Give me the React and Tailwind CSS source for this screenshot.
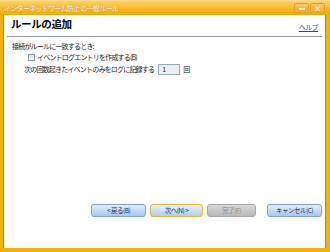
import React from "react";

const jp = { fontFamily: '"Noto Sans CJK JP", "Noto Sans", sans-serif' };

function WizardButton({ label, variant }) {
  // variant: normal | focused | disabled
  const base =
    "h-[13px] rounded-[3px] border flex items-center justify-center text-[6.5px] tracking-[-0.5px] leading-none";
  const styles = {
    normal:
      "w-[55px] border-[#7ea4d8] bg-gradient-to-b from-[#e4eefb] to-[#a9c6ee] text-[#1c2b4a]",
    focused:
      "w-[53px] border-[#e2b53c] bg-gradient-to-b from-[#e8f0fb] to-[#b3cdef] text-[#1c2b4a]",
    disabled:
      "w-[49px] border-[#a8a8a8] bg-gradient-to-b from-[#d8d8d8] to-[#b8b8b8] text-[#8a8a8a]",
  };
  return <div className={`${base} ${styles[variant]}`}>{label}</div>;
}

export default function App() {
  return (
    <div
      className="w-[330px] h-[252px] bg-[#f2b10c] flex flex-col overflow-hidden"
      style={jp}
    >
      {/* title bar */}
      <div className="h-[15px] shrink-0 flex items-center justify-between bg-gradient-to-b from-[#fbd36a] via-[#f6bb2a] to-[#f0a900] border-t border-[#f9d98a]">
        <span className="pl-[4px] text-[7px] tracking-[-0.7px] text-white [text-shadow:0_0_1px_#a06e00]">
          インターネットワーム防止 の一般ルール
        </span>
        <div className="flex gap-[1px] pr-[5px] pt-[1px]">
          <div className="w-[15px] h-[11px] rounded-[2px] border border-[#e2a22a] bg-gradient-to-b from-[#f8c960] to-[#eda624] flex items-center justify-center">
            <div className="w-[6px] h-[2px] bg-[#fff6dc]" />
          </div>
          <div className="w-[15px] h-[11px] rounded-[2px] border border-[#e2a22a] bg-gradient-to-b from-[#f8c960] to-[#eda624] flex items-center justify-center text-[8px] leading-none text-[#fff6dc] font-bold">
            ×
          </div>
        </div>
      </div>

      {/* content */}
      <div className="flex-1 flex pl-[3px] pr-[4px] pb-[4px]">
        <div className="flex-1 bg-white border-l border-[#c98a00] flex flex-col">
          <div className="flex items-end justify-between px-[4px] pt-[4px] pb-[4px] mx-[3px] border-b border-[#a0a0a0]">
            <span className="text-[10.5px] font-bold tracking-[-0.4px] text-black leading-none pb-[2px]">
              ルールの追加
            </span>
            <span className="text-[7px] tracking-[-0.6px] text-[#1f3fd6] underline leading-none pb-[1px]">
              ヘルプ
            </span>
          </div>

          <div className="px-[8px] pt-[5px] text-[7px] tracking-[-0.8px] text-[#1a1a1a] leading-none">
            <div className="h-[10px] flex items-center">接続がルールに一致するとき:</div>
            <div className="h-[11px] flex items-center pl-[16px] gap-[2px]">
              <div className="w-[7px] h-[7px] border border-[#7f9db9] bg-gradient-to-br from-[#dcdcd6] to-[#ffffff]" />
              <span>イベントログエントリを作成する(B)</span>
            </div>
            <div className="h-[13px] flex items-center pl-[12px]">
              <span>次の回数起きたイベントのみをログに記録する</span>
              <div className="ml-[4px] w-[22px] h-[11px] border border-[#9aa7b8] bg-[#ecedf0] flex items-center pl-[3px] text-[7px]">
                1
              </div>
              <span className="ml-[3px]">回</span>
            </div>
          </div>

          <div className="flex-1" />

          <div className="flex gap-[4px] justify-end pr-[3px] pb-[31px]">
            <WizardButton label="< 戻る(B)" variant="normal" />
            <WizardButton label="次へ(N) >" variant="focused" />
            <WizardButton label="完了(F)" variant="disabled" />
            <div className="w-[3px]" />
            <WizardButton label="キャンセル(C)" variant="normal" />
          </div>
        </div>
        <div className="w-[1px] bg-[#c98a00]" />
      </div>
    </div>
  );
}
